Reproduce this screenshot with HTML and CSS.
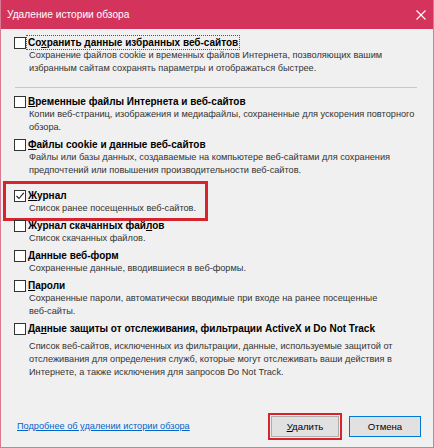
FILE: index.html
```html
<!DOCTYPE html>
<html lang="ru">
<head>
  <meta charset="UTF-8">
  <meta name="viewport" content="width=device-width, initial-scale=1.0">
  <title>Удаление истории обзора</title>
  <link rel="stylesheet" href="styles.css">
</head>
<body>
  <div class="window">
    <div class="titlebar">
      <span class="title">Удаление истории обзора</span>
      <svg class="close" width="10" height="10" viewBox="0 0 10 10"><path d="M0.5 0.5L9.5 9.5M9.5 0.5L0.5 9.5" stroke="#fff" stroke-width="1.1"/></svg>
    </div>

    <div class="content">
      <div class="option">
        <span class="box"></span>
        <span class="label focus">Со<u>х</u>ранить данные избранных веб-сайтов</span>
        <p class="desc">Сохранение файлов cookie и временных файлов Интернета, позволяющих вашим<br>избранным сайтам сохранять параметры и отображаться быстрее.</p>
      </div>
      <hr class="sep">
      <div class="option">
        <span class="box"></span>
        <span class="label"><u>В</u>ременные файлы Интернета и веб-сайтов</span>
        <p class="desc">Копии веб-страниц, изображения и медиафайлы, сохраненные для ускорения повторного<br>обзора.</p>
      </div>
      <div class="option">
        <span class="box"></span>
        <span class="label"><u>Ф</u>айлы cookie и данные веб-сайтов</span>
        <p class="desc">Файлы или базы данных, создаваемые на компьютере веб-сайтами для сохранения<br>предпочтений или повышения производительности веб-сайтов.</p>
      </div>
      <div class="option marked">
        <span class="box checked"><svg width="10" height="10" viewBox="0 0 10 10"><path d="M1.5 5L4 7.5L8.8 1.8" fill="none" stroke="#222" stroke-width="1.1"/></svg></span>
        <span class="label"><u>Ж</u>урнал</span>
        <p class="desc">Список ранее посещенных веб-сайтов.</p>
      </div>
      <div class="option">
        <span class="box"></span>
        <span class="label">Журнал скачанных фай<u>л</u>ов</span>
        <p class="desc">Список скачанных файлов.</p>
      </div>
      <div class="option">
        <span class="box"></span>
        <span class="label"><u>Д</u>анные веб-форм</span>
        <p class="desc">Сохраненные данные, вводившиеся в веб-формы.</p>
      </div>
      <div class="option">
        <span class="box"></span>
        <span class="label"><u>П</u>ароли</span>
        <p class="desc">Сохраненные пароли, автоматически вводимые при входе на ранее посещенные<br>веб-сайты.</p>
      </div>
      <div class="option">
        <span class="box"></span>
        <span class="label">Да<u>н</u>ные защиты от отслеживания, фильтрации ActiveX и Do Not Track</span>
        <p class="desc wide">Список веб-сайтов, исключенных из фильтрации, данные, используемые защитой от<br>отслеживания для определения служб, которые могут отслеживать ваши действия в<br>Интернете, а также исключения для запросов Do Not Track.</p>
      </div>
    </div>

    <div class="footer">
      <a href="#" class="more">Подробнее об удалении истории обзора</a>
      <div class="buttons">
        <button class="btn marked-btn"><u>У</u>далить</button>
        <button class="btn default">Отмена</button>
      </div>
    </div>
  </div>
</body>
</html>
```

FILE: styles.css
```css
body { margin: 0; font-family: "Liberation Sans", Arial, sans-serif; font-size: 10px; color: #000; background: #f0f0f0; }
.window { height: 448px; box-sizing: border-box; display: flex; flex-direction: column; background: #f0f0f0; border: 1px solid #d97a92; border-top: none; overflow: hidden; }
.titlebar { height: 29px; flex: none; background: #d4345c; display: flex; align-items: center; justify-content: space-between; padding: 0 7px 0 7px; margin: 0 -1px; }
.title { color: #fff; font-size: 10.2px; }
.close { margin-right: 1px; }
.content { flex: 1; padding: 7px 15px 0 13px; }
.option { display: grid; grid-template-columns: 12px 1fr; margin-top: 4px; position: relative; }
.option:first-child { margin-top: 0; }
.box { width: 10px; height: 10px; border: 1px solid #333; background: #fff; align-self: center; display: flex; align-items: center; justify-content: center; }
.label { font-weight: bold; line-height: 13px; margin-left: 1px; padding: 0 1px; justify-self: start; white-space: nowrap; }
.label.focus { outline: 1px dotted #555; outline-offset: 0; }
.desc { grid-column: 2; margin: 0; padding-left: 3px; line-height: 13px; color: #333; font-size: 9.2px; white-space: nowrap; }
.desc.wide { margin-top: 5px; }
.sep { border: none; border-top: 1px solid #c9c9c9; margin: 12px 1px 7px 1px; }
.marked { margin-top: 12px; }
.marked::after { content: ""; position: absolute; left: -11px; top: -8px; width: 205px; bottom: -6px; border: 3px solid #d7232b; box-sizing: border-box; }
.footer { flex: none; display: flex; align-items: center; justify-content: space-between; padding: 0 12px 5px 16px; height: 32px; }
.more { color: #0066cc; font-size: 9.2px; }
.buttons { display: flex; gap: 10px; }
.btn { font-family: inherit; font-size: 9.6px; height: 21px; background: #e1e1e1; border: 1px solid #adadad; padding: 0; color: #000; }
.marked-btn { width: 68px; outline: 2px solid #d7232b; outline-offset: 1px; }
.default { width: 72px; border-color: #0078d7; }
```
